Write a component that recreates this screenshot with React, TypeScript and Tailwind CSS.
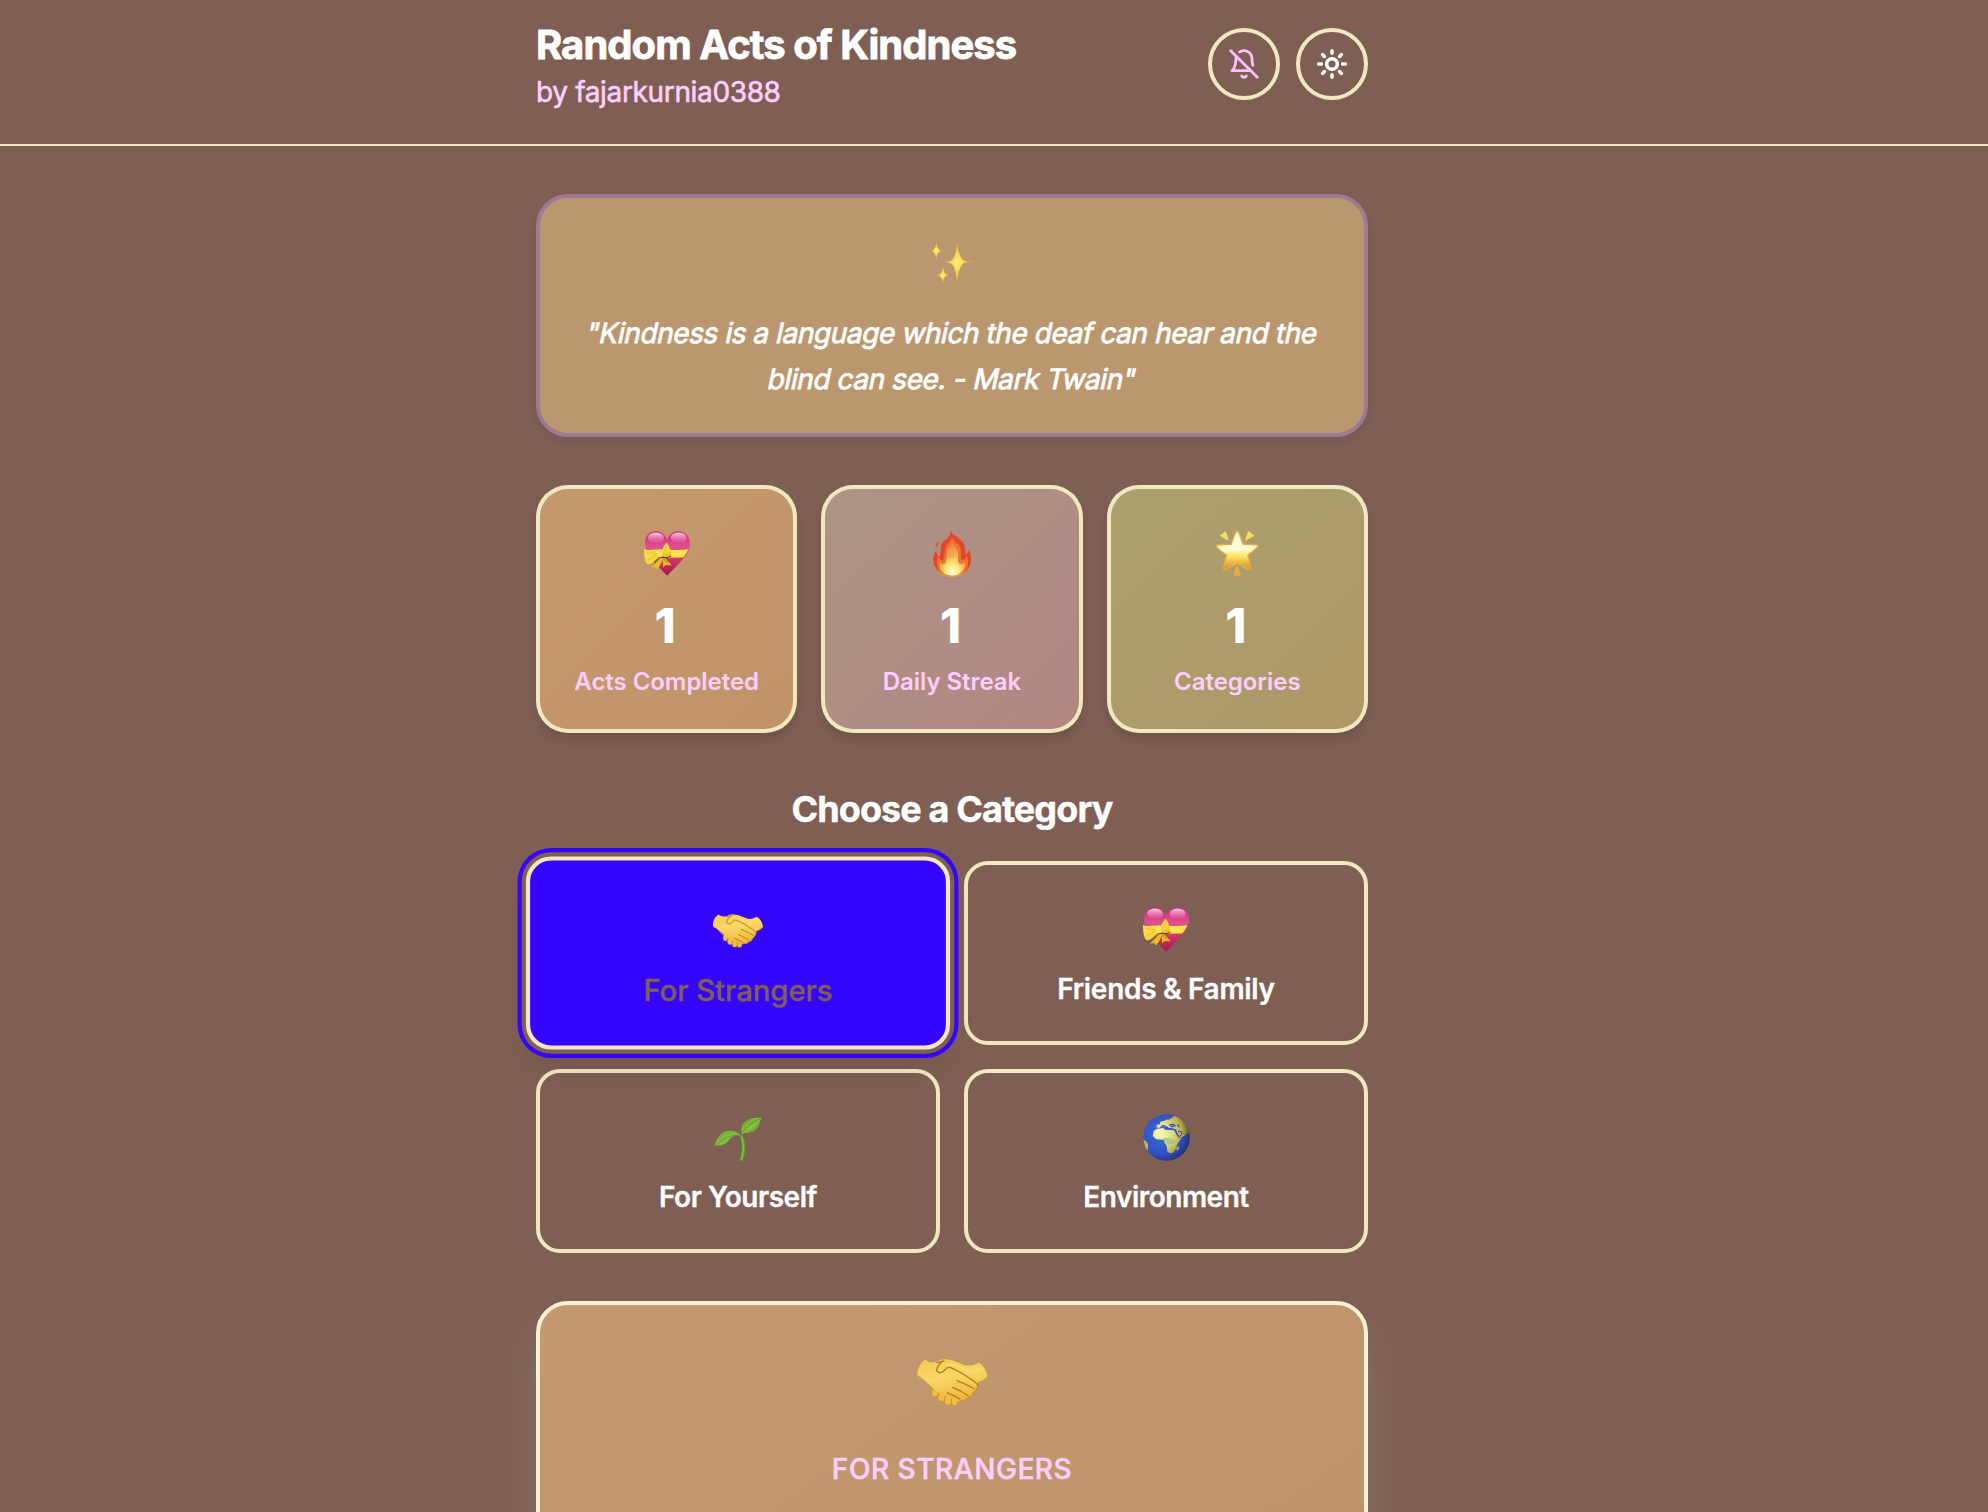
import React from "react";

type IconProps = { className?: string };

function HeartRibbon({ className }: IconProps) {
  return (
    <svg viewBox="0 0 139 135" className={className}>
      <defs>
        <linearGradient id="hr-body" x1="0" y1="0" x2="0" y2="1">
          <stop offset="0" stopColor="#d02a7e" />
          <stop offset="0.35" stopColor="#e0508f" />
          <stop offset="0.6" stopColor="#d5386c" />
          <stop offset="1" stopColor="#9c1a45" />
        </linearGradient>
        <linearGradient id="hr-gloss" x1="0" y1="0" x2="0" y2="1">
          <stop offset="0" stopColor="#fff" stopOpacity="0.8" />
          <stop offset="1" stopColor="#f38dbd" stopOpacity="0.1" />
        </linearGradient>
        <linearGradient id="hr-bow" x1="0" y1="0" x2="1" y2="1">
          <stop offset="0" stopColor="#fae455" />
          <stop offset="0.6" stopColor="#f5d63a" />
          <stop offset="1" stopColor="#d9a91b" />
        </linearGradient>
      </defs>
      <path d="M70 25C62 8 51 0 36 0 15 0 2 15 3 38c2 36 38 65 67 97 30-34 68-61 69-97C139 15 125 0 104 0 89 0 77 9 70 25z" fill="url(#hr-body)" />
      <ellipse cx="36" cy="20" rx="24" ry="16" fill="url(#hr-gloss)" />
      <ellipse cx="105" cy="20" rx="24" ry="16" fill="url(#hr-gloss)" />
      <path d="M62 55c25 3 50 2 72 0-4 10-9 17-15 24-17 2-38 2-57-1z" fill="#fbe44d" />
      <path d="M64 77c20 3 38 3 56 2" stroke="#d8a32b" strokeWidth="2" fill="none" />
      <path d="M50 80 21 110l13-1 5 7c9-8 15-20 18-34zM56 80l2 30 7-8 19 1-20-21z" fill="#e5bd2b" />
      <path d="M44 81 31 100M58 82l13 14" stroke="#9b741a" strokeWidth="2.5" />
      <path d="M48 79c-14 4-19 22-37 21C2 94 0 74 0 54c14 6 27-1 44 3zM52 57c8-4 8-17 16-21 9 7 13 22 14 38-9 8-19 0-30 4z" fill="url(#hr-bow)" />
      <path d="M8 64c12 2 22 4 34 5M10 88c11-5 18-12 30-17M56 70c5-8 9-14 12-24M58 72c9-2 14-1 20-1" stroke="#d3a424" strokeWidth="1.5" fill="none" />
      <path d="M44 80c10-3 25 4 38-5" stroke="#5b3a12" strokeWidth="3" fill="none" />
      <rect x="39" y="55" width="17" height="24" rx="7" fill="#fbe356" />
    </svg>
  );
}

function Fire({ className }: IconProps) {
  return (
    <svg viewBox="0 0 113 141" className={className}>
      <defs>
        <radialGradient id="fi-in" cx="0.5" cy="0.9" r="0.75">
          <stop offset="0" stopColor="#fffbe0" />
          <stop offset="0.25" stopColor="#fdf08a" />
          <stop offset="0.6" stopColor="#f8c04e" />
          <stop offset="1" stopColor="#ee8a3f" />
        </radialGradient>
        <linearGradient id="fi-out" x1="0" y1="0" x2="0" y2="1">
          <stop offset="0" stopColor="#e9472c" />
          <stop offset="0.75" stopColor="#e04526" />
          <stop offset="1" stopColor="#f2a13c" />
        </linearGradient>
      </defs>
      <path d="M52 0c2 15 30 20 40 43 5 10 4 20 4 30 7-2 11-8 10-14 8 11 9 24 6 39 0 2-1 12-5 14 1 6-5 13-10 15-9 9-23 14-40 14-19 0-32-5-41-15-5-2-8-7-7-11-6-5-8-14-7-17-4-12 0-26 7-37 0 9 4 16 10 20 5-13 1-31 9-44 7-10 26-12 24-37z" fill="url(#fi-out)" />
      <path d="M55 18c3 14 20 20 26 34 6 15 0 28 5 38 8 0 12-5 16-12 6 16 4 31-6 43-9 12-22 17-37 17-18 0-32-6-40-18-8-11-10-25-4-38 4 6 9 10 15 10 7-20 2-40 15-52 8-5 11-12 10-22z" fill="#ef713a" />
      <path d="M56 32c2 14 18 21 19 38 1 13-3 26 5 32 7 2 12-1 17-6 0 14-6 26-14 32-8 7-16 9-26 9-18 0-31-8-36-22-2-6-2-12-1-18 5 5 10 7 15 4 9-16 3-33 11-48 5-6 11-11 10-21z" fill="url(#fi-in)" />
      <path d="M58 50c1 14 10 22 5 34-5-4-14-6-22 4 0-14 5-27 17-38z" fill="#f0a050" opacity="0.8" />
      <path d="M16 33c2 8-1 13-7 20-5-7 3-14 7-20z" fill="#e9512e" />
    </svg>
  );
}

function GlowStar({ className }: IconProps) {
  return (
    <svg viewBox="0 0 131 142" className={className}>
      <defs>
        <linearGradient id="gs-a" x1="0" y1="0" x2="0" y2="1">
          <stop offset="0" stopColor="#fffbe6" />
          <stop offset="0.48" stopColor="#fffcd0" />
          <stop offset="0.66" stopColor="#f9e35c" />
          <stop offset="0.88" stopColor="#e7a739" />
          <stop offset="1" stopColor="#dd9434" />
        </linearGradient>
        <linearGradient id="gs-b" x1="0" y1="0" x2="0" y2="1">
          <stop offset="0" stopColor="#f6e46e" />
          <stop offset="1" stopColor="#e2a63a" />
        </linearGradient>
      </defs>
      <path d="M66 3c4 0 5 6 18 40 32 1 45 1 45 5 0 3-7 9-31 28 10 35 10 42 8 44-3 2-8-2-40-18-32 17-37 20-40 18-2-2-1-10 8-44C10 58 3 51 3 48c0-4 11-4 45-5C60 8 63 3 66 3z" fill="url(#gs-a)" stroke="#e3ad42" strokeWidth="4" strokeLinejoin="round" />
      <path d="M14 17 31 4c5 9 7 17 9 29zM118 17 100 4c-5 9-8 18-10 29zM66 110c4 0 7 12 11 26-1 6-22 6-23 0 4-15 8-26 12-26z" fill="url(#gs-b)" />
    </svg>
  );
}

function Handshake({ className }: IconProps) {
  return (
    <svg viewBox="0 0 212 142" className={className}>
      <defs>
        <linearGradient id="hs-a" x1="0" y1="0" x2="0.35" y2="1">
          <stop offset="0" stopColor="#f4c94f" />
          <stop offset="0.5" stopColor="#f9d766" />
          <stop offset="1" stopColor="#efb93f" />
        </linearGradient>
      </defs>
      <g fill="#f0bd45" stroke="#b9801f" strokeWidth="1.5">
        <rect x="43" y="87" width="20" height="27" rx="10" />
        <rect x="62" y="102" width="22" height="27" rx="10" />
        <rect x="82" y="110" width="21" height="30" rx="10" />
        <rect x="103" y="112" width="19" height="29" rx="9" />
      </g>
      <path d="M24 2c8 8 22 11 36 6C72-1 88-1 100 3c22 4 37 17 54 17 12 0 24-4 31-9 13 6 23 22 27 42-7 11-18 14-29 19 0 12-4 22-13 27-2 10-9 16-18 18-6 8-13 9-22 7-3 5-10 5-17 2-10-8-24-13-43-20C55 98 37 77 21 65 11 59 4 56 0 50-1 28 10 9 24 2z" fill="url(#hs-a)" />
      <path d="M1 50c18 9 34 32 47 46M184 71c10-5 22-8 27-18" stroke="#d39a2c" strokeWidth="3" fill="none" />
      <path d="M76 6C66 14 57 28 59 36c5 8 18 6 24-3 5-7 10-9 17-7 24 9 46 24 68 39 7 5 13 10 15 17M120 65c18 7 38 17 52 25M107 86c18 7 34 17 47 26M90 102c14 5 26 11 38 18M80 6c-7 2-14 5-21 4" stroke="#b47b1e" strokeWidth="4" fill="none" strokeLinecap="round" />
      <path d="M183 72c-1 14-4 22-12 27M170 99c-3 9-9 15-18 18M151 117c-5 8-14 9-22 7" stroke="#c98f25" strokeWidth="3" fill="none" />
      <path d="M88 18c12-10 34 5 55 13 16 6 29 5 42-3" stroke="#fae07a" strokeWidth="5" fill="none" opacity="0.6" strokeLinecap="round" />
    </svg>
  );
}

function Sparkles({ className }: IconProps) {
  return (
    <svg viewBox="0 0 136 130" className={className}>
      <defs>
        <radialGradient id="sp-a">
          <stop offset="0" stopColor="#fdee70" />
          <stop offset="0.4" stopColor="#f9d955" />
          <stop offset="1" stopColor="#e9a043" stopOpacity="0.75" />
        </radialGradient>
      </defs>
      <g fill="url(#sp-a)">
        <path d="M82 1c4 38 10 52 21 58 6 3 15 4 33 4-20 1-29 2-35 5-9 6-15 20-19 61-4-42-9-56-19-61-6-3-15-4-35-5 20 0 31-1 37-4 9-5 13-20 17-58z" />
        <path d="M19 0c2 17 4 22 8 25 3 3 6 5 12 5-6 1-10 2-13 5-4 3-6 9-7 25-2-16-4-22-8-25-3-3-6-4-11-5 6 0 9-2 12-5 3-3 6-8 7-25z" />
        <path d="M39 75c2 16 4 21 8 24 3 3 7 4 14 4-7 1-12 2-15 5-4 3-6 8-7 23-2-15-4-20-8-23-3-3-7-4-14-5 7 0 12-1 15-4 3-3 6-8 7-24z" />
      </g>
    </svg>
  );
}

function Seedling({ className }: IconProps) {
  return (
    <svg viewBox="0 0 142 132" className={className}>
      <defs>
        <linearGradient id="se-a" x1="0" y1="0" x2="1" y2="1">
          <stop offset="0" stopColor="#5f9a2b" />
          <stop offset="0.5" stopColor="#86bf3e" />
          <stop offset="1" stopColor="#548e27" />
        </linearGradient>
      </defs>
      <path d="M74 54c12 15 11 50 1 76 3 3 8 2 10 1 11-28 10-60-2-78z" fill="#62a02c" />
      <path d="M81 60c9 22 6 46 0 68" stroke="#a6d859" strokeWidth="2.5" fill="none" />
      <path d="M0 90C6 63 20 40 48 41c12 0 23 6 32 14-18-1-27 4-36 15-11 14-25 17-40 15z" fill="url(#se-a)" />
      <path d="M82 52C76 15 101-1 142 3l-5 8c-2 27-23 36-44 37z" fill="url(#se-a)" />
      <path d="M6 84c14-14 35-27 65-30M84 48c12-18 29-33 53-42" stroke="#4b8724" strokeWidth="2" fill="none" />
      <path d="M17 69c9-10 16-15 28-18M29 76c7-8 10-14 20-16M92 30c8-10 15-15 26-17M99 39c9-6 16-11 24-18" stroke="#a3d254" strokeWidth="3" fill="none" opacity="0.5" />
    </svg>
  );
}

function Globe({ className }: IconProps) {
  return (
    <svg viewBox="0 0 141 141" className={className}>
      <defs>
        <radialGradient id="gl-sea" cx="0.38" cy="0.42" r="0.65">
          <stop offset="0" stopColor="#3f6fdb" />
          <stop offset="0.7" stopColor="#2d4fbd" />
          <stop offset="1" stopColor="#222f72" />
        </radialGradient>
        <radialGradient id="gl-land" gradientUnits="userSpaceOnUse" cx="50" cy="58" r="92">
          <stop offset="0" stopColor="#fdfbc0" />
          <stop offset="0.4" stopColor="#e0dd84" />
          <stop offset="0.75" stopColor="#b8a548" />
          <stop offset="1" stopColor="#4c4c22" />
        </radialGradient>
        <clipPath id="gl-clip"><circle cx="70.5" cy="70.5" r="70" /></clipPath>
      </defs>
      <g clipPath="url(#gl-clip)">
        <rect width="141" height="141" fill="url(#gl-sea)" />
        <path d="M40 40l2-8 10-1-1-8 12-2 7-6 5 3 11-6 8-6 24 3 26 33-2 17-10-1-9 8-13 6-8-17-3-9-11-3-7 3-8-9-9 3-8-5-7 7z" fill="url(#gl-land)" />
        <path d="M32 51l10-7 20-2 3 5 11 1 18 1 7 14 8 10 7-1c-4 9-13 14-14 23l-4 10-8 11-10 2-7-6-2-17-7-10-1-8-23-1-11-10z" fill="url(#gl-land)" />
        <path d="M61 72l22 1 13 5-4 11-15 3-12-9z" fill="#9bc481" opacity="0.75" />
        <path d="M100 102l8-6-1 9-5 6zM0 76l8 5 6 6 2 9-2 8v8L7 101z" fill="#c8b24d" />
        <path d="M56 35l9 1 9 8 10-1 4 3M81 33l10-2 5 4-9 3zM59 12l6-5 9 4-8 6zM103 31l6 8" stroke="#3558bd" strokeWidth="4" fill="none" />
        <path d="M96 50l12 18 7-5 2-9-12-2" stroke="#2d4faf" strokeWidth="3" fill="none" />
      </g>
    </svg>
  );
}

const stats = [
  { Icon: HeartRibbon, size: "w-[46px] h-[45px]", value: "1", label: "Acts Completed", bg: "bg-linear-to-br from-[#c4996d] to-[#c19467]" },
  { Icon: Fire, size: "w-[38px] h-[47px]", value: "1", label: "Daily Streak", bg: "bg-linear-to-br from-[#ac9586] to-[#b28682]" },
  { Icon: GlowStar, size: "w-[44px] h-[47px]", value: "1", label: "Categories", bg: "bg-linear-to-br from-[#aba06f] to-[#af9866]" },
];

const categories = [
  { Icon: Handshake, size: "w-[48px] h-[32px] mt-1.5", label: "For Strangers", tracking: "tracking-[-0.1px]", active: true },
  { Icon: HeartRibbon, size: "w-[46px] h-[45px]", label: "Friends & Family", tracking: "tracking-[-0.3px]", active: false },
  { Icon: Seedling, size: "w-[48px] h-[44px] mt-1", label: "For Yourself", tracking: "tracking-[-0.45px]", active: false },
  { Icon: Globe, size: "w-[47px] h-[47px]", label: "Environment", tracking: "tracking-[-0.5px]", active: false },
];

export default function App() {
  return (
    <div className="h-[1512px] overflow-hidden bg-[#7f5f54] font-['Inter',sans-serif] text-white">
      <header className="h-[146px] border-b-2 border-[#f1e7c1] pr-[84px]">
        <div className="mx-auto flex w-[832px] items-start justify-between">
          <div className="pt-5">
            <h1 className="text-[40px] leading-[50px] font-bold tracking-[-0.95px] [-webkit-text-stroke:0.8px_white]">Random Acts of Kindness</h1>
            <p className="text-[28px] leading-[44px] tracking-[-0.35px] text-[#ffceff] [-webkit-text-stroke:0.6px_#ffceff]">by fajarkurnia0388</p>
          </div>
          <div className="flex gap-4 pt-7">
            <button className="flex size-[72px] items-center justify-center rounded-full border-4 border-[#f1e7c1]">
              <svg viewBox="0 0 24 24" className="size-8 fill-none stroke-[#ffc0ff] stroke-[2.1]" strokeLinecap="round" strokeLinejoin="round">
                <path d="M8.7 3A6 6 0 0 1 18 8a21.3 21.3 0 0 0 .6 5" />
                <path d="M17 17H3s3-2 3-9a4.67 4.67 0 0 1 .3-1.7" />
                <path d="M10.3 21a1.94 1.94 0 0 0 3.4 0" />
                <path d="m2 2 20 20" />
              </svg>
            </button>
            <button className="flex size-[72px] items-center justify-center rounded-full border-4 border-[#f1e7c1]">
              <svg viewBox="0 0 24 24" className="size-8 fill-none stroke-white stroke-[2.6]" strokeLinecap="round">
                <circle cx="12" cy="12" r="4" />
                <path d="M12 2v2M12 20v2M4.93 4.93l1.41 1.41M17.66 17.66l1.41 1.41M2 12h2M20 12h2M6.34 17.66l-1.41 1.41M19.07 4.93l-1.41 1.41" />
              </svg>
            </button>
          </div>
        </div>
      </header>

      <main className="pr-[84px]">
        <div className="mx-auto flex w-[832px] flex-col pt-12">
          <section className="flex h-[243px] flex-col items-center rounded-[32px] border-4 border-[#9e7a94] bg-[#bb9770] px-8 pt-8 text-center shadow-[0_4px_8px_rgba(0,0,0,0.07)]">
            <div className="flex h-[81px] items-start pt-[11px]">
              <Sparkles className="h-[43px] w-[45px]" />
            </div>
            <p className="text-[28px] leading-[45.5px] font-normal tracking-[-0.42px] whitespace-nowrap [-webkit-text-stroke:0.8px_white]">
              <span className="block -skew-x-12">"Kindness is a language which the deaf can hear and the</span>
              <span className="block -skew-x-12">blind can see. - Mark Twain"</span>
            </p>
          </section>

          <section className="mt-12 grid grid-cols-3 gap-6">
            {stats.map(({ Icon, size, value, label, bg }) => (
              <div key={label} className="h-[248px] rounded-[32px] bg-[#f1e7c1] p-1 shadow-[0_8px_12px_-2px_rgba(0,0,0,0.14)]">
                <div className={`flex h-full flex-col items-center rounded-[28px] pt-[39px] ${bg}`}>
                  <div className="flex h-[50px] items-center">
                    <Icon className={size} />
                  </div>
                  <div className="mt-6 pr-[3px] text-[48px] leading-[48px] font-extrabold">{value}</div>
                  <div className="mt-4 text-[24px] leading-8 font-semibold tracking-[-0.05px] text-[#ffceff]">{label}</div>
                </div>
              </div>
            ))}
          </section>

          <h2 className="mt-[52px] text-center text-[36px] leading-[48px] font-bold tracking-[-0.9px] [-webkit-text-stroke:0.4px_white]">Choose a Category</h2>

          <section className="mt-7 grid grid-cols-2 gap-6">
            {categories.map(({ Icon, size, label, tracking, active }) => (
              <button
                key={label}
                className={`flex h-[184px] flex-col items-center rounded-[24px] border-4 border-[#f1e7c1] pt-[39px] ${
                  active
                    ? "scale-105 bg-[#3405ff] text-[#7f5f54] shadow-[0_0_0_4px_#7f5f54,0_0_0_8px_#3405ff,0_20px_30px_-6px_rgba(0,0,0,0.12)] [-webkit-text-stroke:0.3px_#7f5f54]"
                    : "[-webkit-text-stroke:0.3px_white]"
                }`}
              >
                <span className="flex h-[50px] items-center">
                  <Icon className={size} />
                </span>
                <span className={`mt-[15px] text-[28px] leading-10 ${tracking} ${active ? "font-medium" : "font-semibold"}`}>{label}</span>
              </button>
            ))}
          </section>

          <section className="mt-12 flex h-[600px] flex-col items-center rounded-[32px] border-4 border-[#fff1d6] bg-linear-to-br from-[#c3996f] to-[#bd9269] pt-[54px] shadow-[0_24px_40px_-6px_rgba(175,150,148,0.35)]">
            <Handshake className="h-[47px] w-[71px]" />
            <p className="mt-[43px] text-[28px] leading-10 font-medium tracking-[0.55px] text-[#ffceff] [-webkit-text-stroke:0.5px_#ffceff]">FOR STRANGERS</p>
          </section>
        </div>
      </main>
    </div>
  );
}
